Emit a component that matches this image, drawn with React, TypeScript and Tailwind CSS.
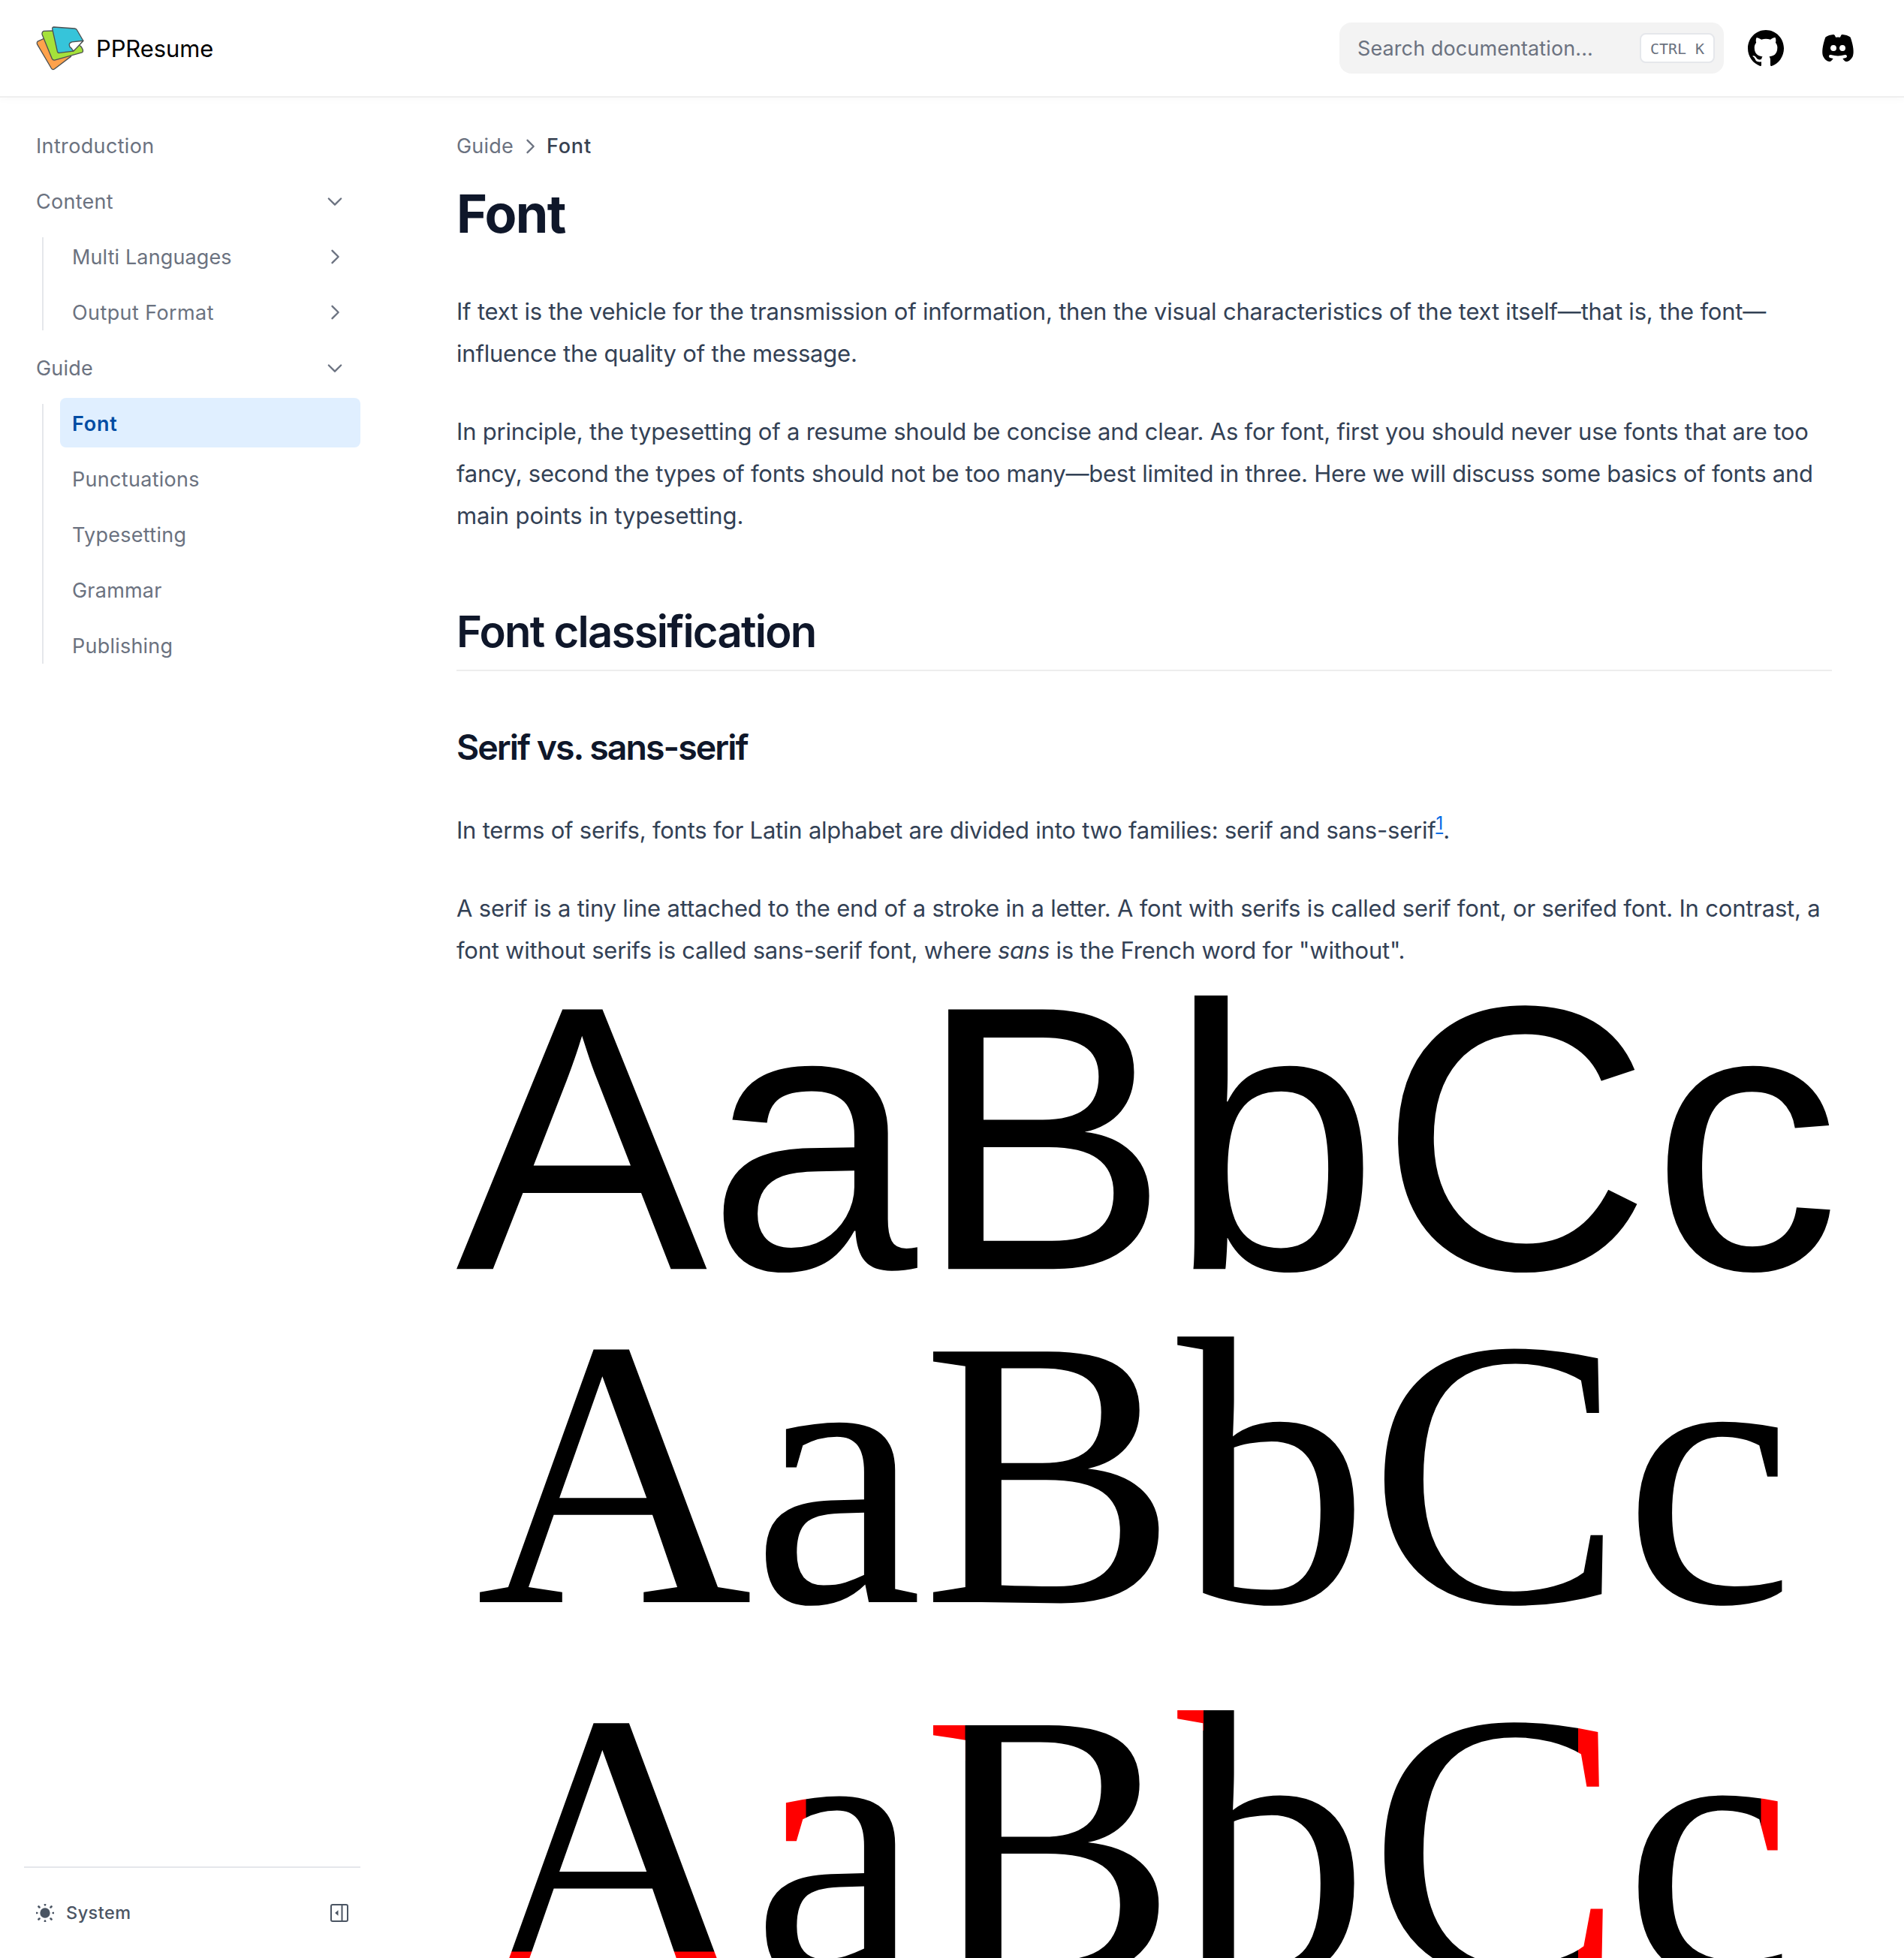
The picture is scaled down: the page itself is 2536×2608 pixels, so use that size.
import React from "react";
import { TbBrandDiscordFilled } from "react-icons/tb";

function Logo() {
  return (
    <svg viewBox="143 103 192 178" className="h-[59px] w-16" stroke="#4b5052" strokeWidth="4" strokeLinejoin="round">
      <path fill="#ffa24c" d="M149 164 L188 146 L283 224 L216 275 Q209 279 204 272 L147 175 Q145 167 149 164Z" />
      <path fill="#a5e13a" d="M173 122 L212 121 L322 183 Q334 199 330 206 Q328 209 322 210 L217 239 Q210 240 207 234 L167 136 Q165 125 173 122Z" />
      <path fill="#36c4da" d="M214 106 L298 112 Q304 113 307 118 L332 161 L292 203 L237 210 Q230 211 228 204 L208 114 Q207 106 214 106Z" />
      <path fill="#ffffff" d="M332 161 L287 166 Q275 170 276 178 Q279 191 284 190 Q288 196 292 203 Q301 196 332 161Z" />
    </svg>
  );
}

function GithubIcon() {
  return (
    <svg viewBox="3 3 18 18" className="size-12" fill="currentColor">
      <path d="M12 3C7.0275 3 3 7.12937 3 12.2276C3 16.3109 5.57625 19.7597 9.15374 20.9824C9.60374 21.0631 9.77249 20.7863 9.77249 20.5441C9.77249 20.3249 9.76125 19.5982 9.76125 18.8254C7.5 19.2522 6.915 18.2602 6.735 17.7412C6.63375 17.4759 6.19499 16.6569 5.8125 16.4378C5.4975 16.2647 5.0475 15.838 5.80124 15.8264C6.51 15.8149 7.01625 16.4954 7.18499 16.7723C7.99499 18.1679 9.28875 17.7758 9.80625 17.5335C9.885 16.9337 10.1212 16.53 10.38 16.2993C8.3775 16.0687 6.285 15.2728 6.285 11.7432C6.285 10.7397 6.63375 9.9092 7.20749 9.26326C7.1175 9.03257 6.8025 8.08674 7.2975 6.81794C7.2975 6.81794 8.05125 6.57571 9.77249 7.76377C10.4925 7.55615 11.2575 7.45234 12.0225 7.45234C12.7875 7.45234 13.5525 7.55615 14.2725 7.76377C15.9937 6.56418 16.7475 6.81794 16.7475 6.81794C17.2424 8.08674 16.9275 9.03257 16.8375 9.26326C17.4113 9.9092 17.76 10.7281 17.76 11.7432C17.76 15.2843 15.6563 16.0687 13.6537 16.2993C13.98 16.5877 14.2613 17.1414 14.2613 18.0065C14.2613 19.2407 14.25 20.2326 14.25 20.5441C14.25 20.7863 14.4188 21.0746 14.8688 20.9824C16.6554 20.364 18.2079 19.1866 19.3078 17.6162C20.4077 16.0457 20.9995 14.1611 21 12.2276C21 7.12937 16.9725 3 12 3Z" />
    </svg>
  );
}

function Chevron({ open = false }: { open?: boolean }) {
  return (
    <svg
      viewBox="0 0 24 24"
      className={open ? "mt-px size-7 rotate-90" : "mt-px size-7"}
      fill="none"
      stroke="currentColor"
      strokeWidth="2"
      strokeLinecap="round"
      strokeLinejoin="round"
    >
      <path d="M9 5l7 7-7 7" />
    </svg>
  );
}

function SunIcon() {
  return (
    <svg viewBox="3 3 18 18" className="size-6" fill="currentColor" stroke="currentColor" strokeWidth="2" strokeLinecap="round">
      <path d="M12 3v1m0 16v1m9-9h-1M4 12H3m15.364 6.364l-.707-.707M6.343 6.343l-.707-.707m12.728 0l-.707.707M6.343 17.657l-.707.707M16 12a4 4 0 11-8 0 4 4 0 018 0z" />
    </svg>
  );
}

function CollapseIcon() {
  return (
    <svg viewBox="0 0 24 24" className="size-6" fill="none" stroke="currentColor" strokeWidth="2">
      <rect x="1" y="1" width="22" height="22" rx="2" />
      <path d="M15.5 1v22" />
      <path d="M6.2 12l4.3-3.8v7.6z" fill="currentColor" stroke="none" />
    </svg>
  );
}

function Header() {
  return (
    <header className="flex h-[130px] shrink-0 items-center justify-between border-b-2 border-[#efefef] bg-white pr-16 pl-12 shadow-[0_4px_8px_rgba(0,0,0,0.02)]">
      <div className="flex items-center gap-4">
        <Logo />
        <span className="pt-px text-[31px] leading-[37px] tracking-[-0.12px] text-black">PPResume</span>
      </div>
      <div className="flex items-center">
        <div className="mr-8 flex h-[68px] w-[512px] items-center justify-between rounded-2xl bg-[#f3f3f3] pr-3 pl-6">
          <span className="pt-px text-[27px] leading-[33px] tracking-[0.1px] text-[#6b7280]">Search documentation...</span>
          <kbd className="flex h-10 w-[100px] items-center justify-center rounded-lg border-2 border-[#e5e7eb] bg-white pt-px font-['DejaVu_Sans_Mono',monospace] text-[20px] leading-6 whitespace-pre text-[#6b7280]">
            CTRL K
          </kbd>
        </div>
        <div className="flex items-center gap-12 text-black">
          <GithubIcon />
          <TbBrandDiscordFilled className="size-12" />
        </div>
      </div>
    </header>
  );
}

type Item = { label: string; tracking: string; chevron?: "open" | "closed"; active?: boolean; children?: Item[] };

const items: Item[] = [
  { label: "Introduction", tracking: "tracking-[0.35px]" },
  {
    label: "Content",
    tracking: "tracking-[0.26px]",
    chevron: "open",
    children: [
      { label: "Multi Languages", tracking: "tracking-[0.12px]", chevron: "closed" },
      { label: "Output Format", tracking: "tracking-[0.4px]", chevron: "closed" },
    ],
  },
  {
    label: "Guide",
    tracking: "tracking-[0.2px]",
    chevron: "open",
    children: [
      { label: "Font", tracking: "tracking-[0.8px]", active: true },
      { label: "Punctuations", tracking: "tracking-[0.3px]" },
      { label: "Typesetting", tracking: "tracking-[0.28px]" },
      { label: "Grammar", tracking: "tracking-[0.22px]" },
      { label: "Publishing", tracking: "tracking-[0.22px]" },
    ],
  },
];

function NavItem({ item }: { item: Item }) {
  return (
    <li className="flex flex-col gap-2">
      <a
        className={
          item.active
            ? "flex h-[66px] items-center rounded-lg bg-[#e0efff] px-4 font-semibold text-[#004ca3]"
            : "flex h-[66px] items-center justify-between pr-5 pl-4 text-[#6b7280]"
        }
      >
        <span className={`pt-[3px] text-[27px] leading-[33px] ${item.tracking}`}>{item.label}</span>
        {item.chevron && <Chevron open={item.chevron === "open"} />}
      </a>
      {item.children && (
        <div className="flex pl-6">
          <div className="my-2 w-0.5 bg-[#e5e7eb]" />
          <ul className="ml-[22px] flex flex-1 flex-col gap-2">
            {item.children.map((c) => (
              <NavItem key={c.label} item={c} />
            ))}
          </ul>
        </div>
      )}
    </li>
  );
}

function Sidebar() {
  return (
    <aside className="flex w-[480px] shrink-0 flex-col pt-[30px] pl-8">
      <ul className="flex flex-1 flex-col gap-2">
        {items.map((i) => (
          <NavItem key={i.label} item={i} />
        ))}
      </ul>
      <div className="flex h-[122px] items-center justify-between border-t-2 border-[#e5e7eb] pr-4 pl-4 text-[#4b5563]">
        <div className="flex items-center gap-4">
          <SunIcon />
          <span className="text-[23.5px] leading-[28px] font-medium tracking-[0.45px]">System</span>
        </div>
        <CollapseIcon />
      </div>
    </aside>
  );
}

/* Areas of the third specimen that are serifs, in figure coordinates. */
const serifAreas = [
  { x: 0, y: 1274.5, width: 400, height: 20 },
  { x: 430, y: 1050, width: 35.5, height: 90 },
  { x: 620, y: 960, width: 57.5, height: 60 },
  { x: 950, y: 940, width: 45, height: 40 },
  { x: 1494, y: 960, width: 50, height: 340 },
  { x: 1737.5, y: 1050, width: 40, height: 110 },
];

function SerifFigure() {
  return (
    <svg viewBox="0 0 1832 1283" className="mt-[31.5px] h-[1283px] w-[1832px] overflow-visible">
      <defs>
        <pattern id="serifs" patternUnits="userSpaceOnUse" x="0" y="0" width="1832" height="1400">
          <rect width="1832" height="1400" fill="#000000" />
          {serifAreas.map((a, i) => (
            <rect key={i} {...a} fill="#ff0000" />
          ))}
        </pattern>
      </defs>
      <text x="-0.9" y="365.2" fontSize="502.6" className="font-['Liberation_Sans',sans-serif]">AaBbCc</text>
      <text x="26.1" y="808.9" fontSize="509.6" className="font-['Liberation_Serif',serif]">AaBbCc</text>
      <text x="26.1" y="1306.7" fontSize="509.6" fill="url(#serifs)" className="font-['Liberation_Serif',serif]">AaBbCc</text>
    </svg>
  );
}

export default function App() {
  return (
    <div className="flex h-[2608px] w-[2536px] flex-col overflow-hidden bg-white font-['Inter',sans-serif]">
      <Header />
      <div className="flex min-h-0 flex-1">
        <Sidebar />
        <main className="ml-32 w-[1832px] pt-11 text-[31px] leading-[56px] whitespace-nowrap text-[#334155]">
          <nav className="flex items-center text-[27px] leading-[41px] text-[#6b7280]">
            <span className="mr-2 tracking-[0.2px]">Guide</span>
            <Chevron />
            <span className="ml-2 font-medium tracking-[0.84px] text-[#374151]">Font</span>
          </nav>
          <h1 className="mt-[27px] text-[70px] leading-[85px] font-bold tracking-[-1.65px] text-[#0f172a]">Font</h1>
          <p className="mt-[59.5px] tracking-[-0.208px]">
            If text is the vehicle for the transmission of information, then the visual characteristics of the text itself—that is, the font—
            <br />
            influence the quality of the message.
          </p>
          <p className="mt-12 tracking-[-0.2px]">
            In principle, the typesetting of a resume should be concise and clear. As for font, first you should never use fonts that are too
            <br />
            <span className="tracking-[-0.245px]">
              fancy, second the types of fonts should not be too many—best limited in three. Here we will discuss some basics of fonts and
            </span>
            <br />
            <span className="tracking-[-0.1px]">main points in typesetting.</span>
          </p>
          <h2 className="mt-[91.5px] border-b-2 border-[#ededed] pb-4 text-[58px] leading-[70px] font-semibold tracking-[-1.73px] text-[#0f172a]">
            Font classification
          </h2>
          <h3 className="mt-[73px] text-[46.5px] leading-[56px] font-semibold tracking-[-1.98px] text-[#0f172a]">Serif vs. sans-serif</h3>
          <p className="mt-[54.5px] tracking-[-0.222px]">
            In terms of serifs, fonts for Latin alphabet are divided into two families: serif and sans-serif
            <sup className="text-[24px] tracking-normal text-[#006be6] underline decoration-2 underline-offset-4">1</sup>.
          </p>
          <p className="mt-12 tracking-[-0.19px]">
            A serif is a tiny line attached to the end of a stroke in a letter. A font with serifs is called serif font, or serifed font. In contrast, a
            <br />
            <span className="tracking-[-0.25px]">
              font without serifs is called sans-serif font, where <em>sans</em> is the French word for "without".
            </span>
          </p>
          <SerifFigure />
        </main>
      </div>
    </div>
  );
}
